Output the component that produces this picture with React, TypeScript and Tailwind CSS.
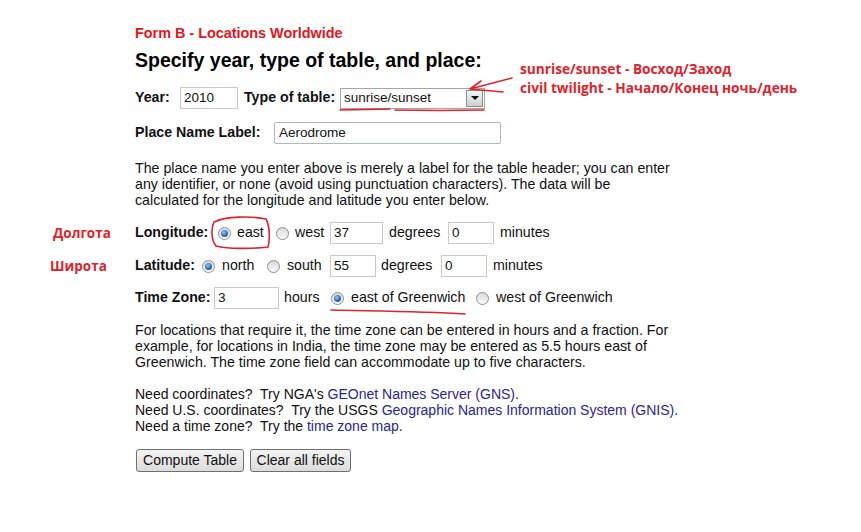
import React from 'react'

function Radio({ checked }: { checked?: boolean }) {
  return (
    <span className="inline-flex w-[13px] h-[13px] rounded-full border border-[#8e8f8f] bg-gradient-to-b from-[#d9d9d9] to-[#fafafa] items-center justify-center shrink-0">
      {checked && (
        <span className="block w-[7px] h-[7px] rounded-full bg-[radial-gradient(circle_at_40%_35%,#9cc9ee,#2a6fb5_55%,#123e6e)]" />
      )}
    </span>
  )
}

function Field({ value, w }: { value: string; w: string }) {
  return (
    <span className={`inline-flex items-center h-[22px] border border-[#c9c9c9] bg-white px-[3px] text-[13.5px] ${w}`}>
      {value}
    </span>
  )
}

function Btn({ children, w }: { children: React.ReactNode; w: string }) {
  return (
    <span className={`inline-flex items-center justify-center h-[23px] border border-[#707070] rounded-[3px] bg-gradient-to-b from-[#f3f3f3] to-[#dcdcdc] text-[14px] ${w}`}>
      {children}
    </span>
  )
}

export default function App() {
  return (
    <div className="relative w-[861px] h-[532px] bg-white text-[#111] font-['Liberation_Sans',Arial,sans-serif]">
      <div className="pl-[135px] pt-[24px] flex flex-col">
        <div className="h-[18px] leading-[18px] text-[14.4px] font-bold text-[#e3151a]">
          Form B - Locations Worldwide
        </div>
        <div className="mt-[6px] h-[24px] leading-[24px] text-[19.5px] font-bold text-black">
          Specify year, type of table, and place:
        </div>

        <div className="mt-[15px] h-[22px] flex items-center text-[14.2px]">
          <b className="w-[45px]">Year:</b>
          <Field value="2010" w="w-[58px]" />
          <b className="ml-[6px] w-[96px]">Type of table:</b>
          <span className="inline-flex items-center justify-between h-[21px] w-[145px] border border-[#a6a6a6] bg-white pl-[3px] pr-[1px] text-[13.5px]">
            <span>sunrise/sunset</span>
            <span className="flex items-center justify-center w-[17px] h-[17px] border border-[#8c8c8c] bg-gradient-to-b from-[#f4f4f4] to-[#cfcfcf]">
              <span className="w-0 h-0 border-l-[4px] border-r-[4px] border-t-[4px] border-l-transparent border-r-transparent border-t-black" />
            </span>
          </span>
        </div>

        <div className="mt-[13px] h-[22px] flex items-center text-[14.2px]">
          <b className="w-[139px]">Place Name Label:</b>
          <span className="inline-flex items-center h-[22px] w-[227px] border border-[#a9b9cc] rounded-[2px] bg-white px-[4px] text-[13.5px]">
            Aerodrome
          </span>
        </div>

        <p className="mt-[16px] text-[14.2px] leading-[16px] whitespace-nowrap">
          The place name you enter above is merely a label for the table header; you can enter
          <br />
          any identifier, or none (avoid using punctuation characters). The data will be
          <br />
          calculated for the longitude and latitude you enter below.
        </p>

        <div className="mt-[14px] h-[22px] flex items-center text-[14.2px]">
          <b className="w-[83px]">Longitude:</b>
          <Radio checked />
          <span className="ml-[6px] w-[39px]">east</span>
          <Radio />
          <span className="ml-[6px] w-[35px]">west</span>
          <Field value="37" w="w-[53px]" />
          <span className="ml-[6px] w-[59px]">degrees</span>
          <Field value="0" w="w-[46px]" />
          <span className="ml-[6px]">minutes</span>
        </div>

        <div className="mt-[11px] h-[22px] flex items-center text-[14.2px]">
          <b className="w-[67px]">Latitude:</b>
          <Radio checked />
          <span className="ml-[7px] w-[45px]">north</span>
          <Radio />
          <span className="ml-[7px] w-[43px]">south</span>
          <Field value="55" w="w-[46px]" />
          <span className="ml-[5px] w-[60px]">degrees</span>
          <Field value="0" w="w-[46px]" />
          <span className="ml-[6px]">minutes</span>
        </div>

        <div className="mt-[10px] h-[22px] flex items-center text-[14.2px]">
          <b className="w-[79px]">Time Zone:</b>
          <Field value="3" w="w-[65px]" />
          <span className="ml-[5px] w-[47px]">hours</span>
          <Radio checked />
          <span className="ml-[7px] w-[125px]">east of Greenwich</span>
          <Radio />
          <span className="ml-[7px]">west of Greenwich</span>
        </div>

        <p className="mt-[13px] text-[14.2px] leading-[16px] whitespace-nowrap">
          For locations that require it, the time zone can be entered in hours and a fraction. For
          <br />
          example, for locations in India, the time zone may be entered as 5.5 hours east of
          <br />
          Greenwich. The time zone field can accommodate up to five characters.
        </p>

        <p className="mt-[16px] text-[14px] leading-[16px] whitespace-pre">
          {'Need coordinates?  Try NGA\'s '}
          <span className="text-[#25259e]">GEOnet Names Server (GNS)</span>.
          <br />
          {'Need U.S. coordinates?  Try the USGS '}
          <span className="text-[#25259e]">Geographic Names Information System (GNIS)</span>.
          <br />
          {'Need a time zone?  Try the '}
          <span className="text-[#25259e]">time zone map</span>.
        </p>

        <div className="mt-[15px] flex items-center gap-[6px] pl-px">
          <Btn w="w-[108px]">Compute Table</Btn>
          <Btn w="w-[101px]">Clear all fields</Btn>
        </div>
      </div>

      {/* red annotations */}
      <div className="absolute left-[520px] top-[59px] text-[13.7px] leading-[19px] font-bold text-[#e0222b] font-['Open_Sans',sans-serif] whitespace-nowrap">
        <div>sunrise/sunset - Восход/Заход</div>
        <div>civil twilight - Начало/Конец ночь/день</div>
      </div>
      <div className="absolute left-[53px] top-[223px] text-[13.5px] font-bold text-[#e0222b] font-['Open_Sans',sans-serif]">
        Долгота
      </div>
      <div className="absolute left-[50px] top-[256px] text-[13.5px] font-bold text-[#e0222b] font-['Open_Sans',sans-serif]">
        Широта
      </div>
      <svg className="absolute left-0 top-0" width="861" height="532" fill="none" stroke="#e0222b" strokeWidth="1.6" strokeLinecap="round">
        <path d="M340 110 L390 109 M395 110 L440 110.5 L484 110" />
        <path d="M512 78 L470 89 M470 89 L481 81 M470 89 L503 92" />
        <path d="M214 222 C226 216 252 216 266 219 C270 226 270 240 268 247 C252 249 228 249 216 246 C211 240 211 228 214 222 Z" />
        <path d="M331 310 C370 311 420 311 465 314" />
      </svg>
    </div>
  )
}
